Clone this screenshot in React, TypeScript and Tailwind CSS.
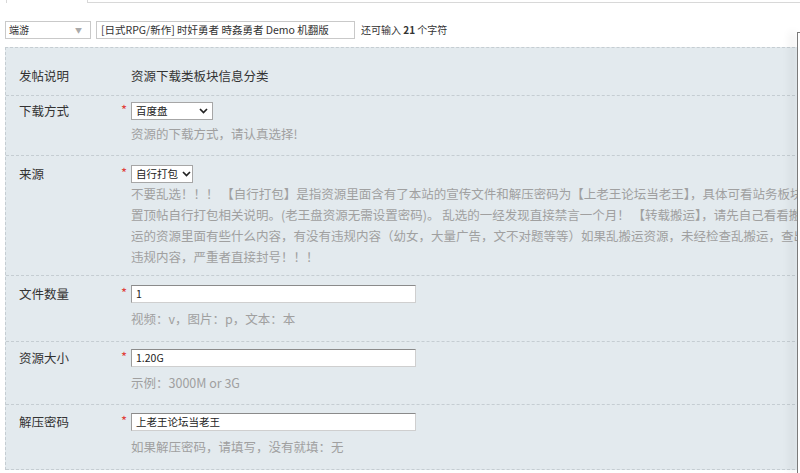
import React from "react";

const font = "font-['Noto_Sans_CJK_SC','Noto_Sans',sans-serif]";

function Chevron() {
    return (
        <svg width="9" height="6" viewBox="0 0 9 6" className="shrink-0">
            <path d="M1 1 L4.5 4.5 L8 1" fill="none" stroke="#222" strokeWidth="1.7" />
        </svg>
    );
}

function Select({ value, width }: { value: string; width: string }) {
    return (
        <div
            className={`flex h-[18px] ${width} items-center justify-between gap-[4px] whitespace-nowrap border border-[#a6a6a6] bg-white pl-[4px] pr-[4px] text-[10.5px] leading-none text-[#222]`}
        >
            <span>{value}</span>
            <Chevron />
        </div>
    );
}

function TextInput({ value }: { value: string }) {
    return (
        <div className="flex h-[18px] w-[285px] items-center border border-[#cfcfcf] border-t-[#8a8a8a] border-l-[#9c9c9c] bg-white pl-[4px] text-[10.5px] leading-none text-[#222]">
            {value}
        </div>
    );
}

function Row({
    label,
    pt,
    pb,
    hintMt,
    control,
    hint,
}: {
    label: string;
    pt: string;
    pb: string;
    hintMt: string;
    control: React.ReactNode;
    hint: React.ReactNode;
}) {
    return (
        <div className={`flex border-b border-dashed border-[#c5cdd2] ${pt} ${pb}`}>
            <div className="w-[112px] shrink-0 pl-[13px] text-[12.5px] leading-[18px] text-[#333]">
                {label}
            </div>
            <span className="w-[13px] shrink-0 pr-[4px] text-right text-[13px] leading-[16px] text-[#e0403a]">
                *
            </span>
            <div className="flex min-w-0 flex-col">
                {control}
                <div className={`${hintMt} text-[12.5px] text-[#a0a0a0]`}>{hint}</div>
            </div>
        </div>
    );
}

export default function App() {
    return (
        <div className={`relative h-[473px] w-[800px] overflow-hidden bg-white ${font}`}>
            {/* tab strip edge */}
            <div className="flex h-[3px]">
                <div className="w-[6px]" />
                <div className="w-[82px] border-x border-[#d8d8d8]" />
                <div className="flex-1 border-b border-[#d8d8d8]" />
            </div>

            {/* type + title */}
            <div className="mt-[18px] flex h-[18px] items-center pl-[5px]">
                <div className="flex h-[18px] w-[86px] items-center justify-between border border-[#c9c9c9] bg-white pl-[3px] pr-[8px] text-[10px] leading-none text-[#333]">
                    <span>端游</span>
                    <span className="text-[7px] text-[#aaa]">▼</span>
                </div>
                <div className="ml-[5px] flex h-[18px] w-[259px] items-center border border-[#c9c9c9] bg-white pl-[4px] text-[10.5px] leading-none text-[#333]">
                    [日式RPG/新作] 时奸勇者 時姦勇者 Demo 机翻版
                </div>
                <div className="ml-[6px] text-[10px] leading-none text-[#333]">
                    还可输入 <b className="font-bold">21</b> 个字符
                </div>
            </div>

            {/* form panel */}
            <div className="ml-[5px] mt-[8px] border-l border-t border-dashed border-[#c5cdd2] bg-[#e3eaee]">
                <div className="flex border-b border-dashed border-[#c5cdd2] pb-[9px] pt-[18px] text-[12.5px] leading-[20px] text-[#333]">
                    <div className="w-[112px] shrink-0 pl-[13px]">发帖说明</div>
                    <div className="w-[13px] shrink-0" />
                    <div>资源下载类板块信息分类</div>
                </div>

                <Row
                    label="下载方式"
                    pt="pt-[6px]"
                    pb="pb-[11px]"
                    hintMt="mt-[4px] leading-[20px]"
                    control={<Select value="百度盘" width="w-[82px]" />}
                    hint="资源的下载方式，请认真选择!"
                />

                <Row
                    label="来源"
                    pt="pt-[9px]"
                    pb="pb-[8px]"
                    hintMt="mt-0 leading-[21px] whitespace-nowrap"
                    control={<Select value="自行打包" width="w-[62px]" />}
                    hint={
                        <>
                            <div>不要乱选！！！ 【自行打包】是指资源里面含有了本站的宣传文件和解压密码为【上老王论坛当老王】，具体可看站务板块</div>
                            <div>置顶帖自行打包相关说明。(老王盘资源无需设置密码)。 乱选的一经发现直接禁言一个月！ 【转载搬运】，请先自己看看搬</div>
                            <div>运的资源里面有些什么内容，有没有违规内容（幼女，大量广告，文不对题等等）如果乱搬运资源，未经检查乱搬运，查出有</div>
                            <div>违规内容，严重者直接封号！！！</div>
                        </>
                    }
                />

                <Row
                    label="文件数量"
                    pt="pt-[9px]"
                    pb="pb-[12px]"
                    hintMt="mt-[6px] leading-[20px]"
                    control={<TextInput value="1" />}
                    hint="视频：v，图片：p，文本：本"
                />

                <Row
                    label="资源大小"
                    pt="pt-[7px]"
                    pb="pb-[11px]"
                    hintMt="mt-[6px] leading-[20px]"
                    control={<TextInput value="1.20G" />}
                    hint="示例：3000M or 3G"
                />

                <Row
                    label="解压密码"
                    pt="pt-[8px]"
                    pb="pb-[12px]"
                    hintMt="mt-[6px] leading-[20px]"
                    control={<TextInput value="上老王论坛当老王" />}
                    hint="如果解压密码，请填写，没有就填：无"
                />
            </div>

            {/* edge of floating side panel */}
            <div className="absolute bottom-0 left-[797px] top-[32px] w-[3px] border-l border-t border-[#7a7a7a] bg-white shadow-[-6px_0_8px_rgba(0,0,0,0.12)]" />
        </div>
    );
}
